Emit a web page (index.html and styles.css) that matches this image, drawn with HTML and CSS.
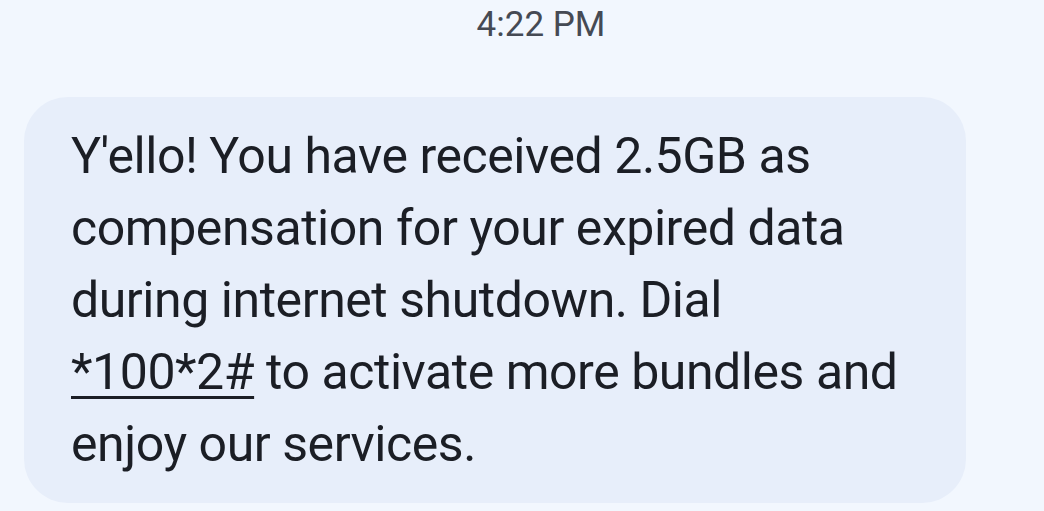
FILE: index.html
```html
<!DOCTYPE html>
<html>
<head>
<meta charset="utf-8">
<link rel="stylesheet" href="styles.css">
</head>
<body>
<div class="thread">
  <div class="time">4:22 PM</div>
  <div class="bubble">
    <p class="msg">Y'ello! You have received 2.5GB as<br>compensation for your expired data<br>during internet shutdown. Dial<br><span class="code">*100*2#</span> to activate more bundles and<br>enjoy our services.</p>
  </div>
</div>
</body>
</html>
```

FILE: styles.css
```css
html, body {
  margin: 0;
  padding: 0;
  background: #f2f7fe;
}
body {
  width: 1044px;
  height: 511px;
  overflow: hidden;
  font-family: Roboto, "Noto Sans", sans-serif;
}
.thread {
  display: flex;
  flex-direction: column;
}
.time {
  height: 50px;
  line-height: 50px;
  font-size: 35px;
  color: #454a54;
  text-align: center;
  padding-left: 38px;
}
.bubble {
  margin: 47px 0 0 24px;
  width: 942px;
  box-sizing: border-box;
  background: #e7eefa;
  border-radius: 44px;
  padding: 23px 20px 23px 47px;
}
.msg {
  margin: 0;
  font-size: 50px;
  line-height: 72px;
  letter-spacing: -0.45px;
  color: #1b1e25;
  white-space: nowrap;
}
.code {
  text-decoration: underline;
  text-decoration-thickness: 3px;
  text-underline-offset: 7px;
}
```
